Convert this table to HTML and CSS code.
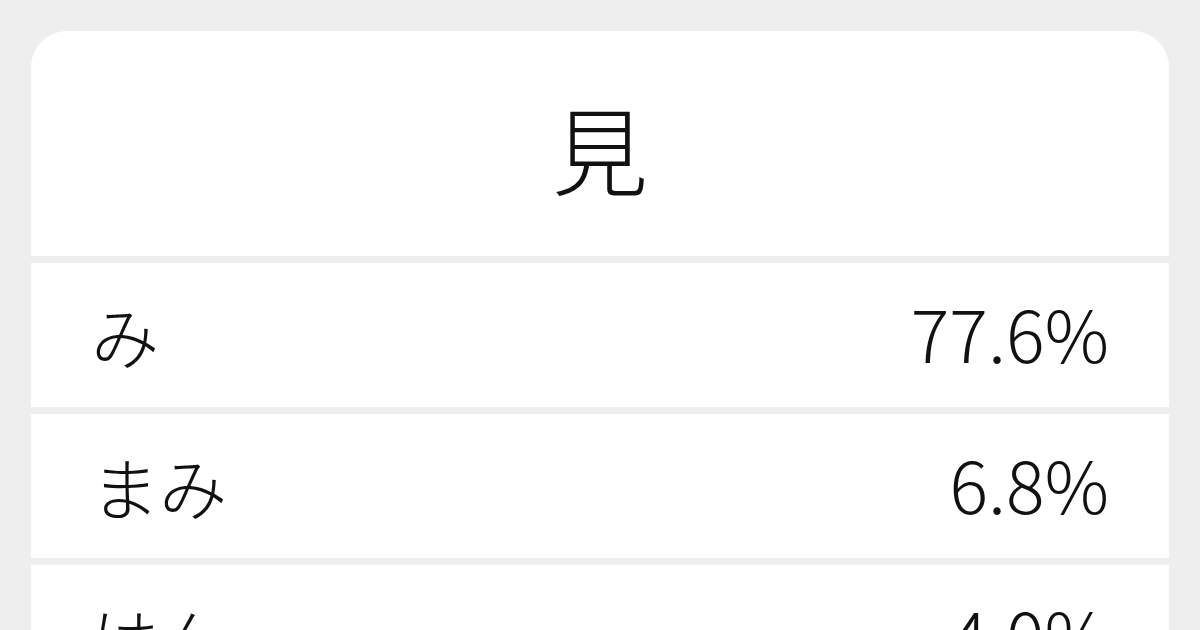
FILE: index.html
```html
<!DOCTYPE html>
<html lang="ja">
<head>
<meta charset="utf-8">
<link rel="stylesheet" href="styles.css">
</head>
<body>
<div class="card">
  <div class="head"><h1 class="kanji">見</h1></div>
  <div class="row"><span class="reading">み</span><span class="pct">77.6%</span></div>
  <div class="row"><span class="reading">まみ</span><span class="pct">6.8%</span></div>
  <div class="row"><span class="reading">はん</span><span class="pct">4.0%</span></div>
</div>
</body>
</html>
```
FILE: styles.css
```css
html, body {
  margin: 0;
  padding: 0;
  background: #eeeeee;
}
body {
  width: 1200px;
  height: 630px;
  overflow: hidden;
  padding: 31px 31px 0;
  box-sizing: border-box;
  font-family: "Noto Sans CJK JP", "Noto Sans", sans-serif;
  font-weight: 300;
  color: #111111;
}
.card {
  display: flex;
  flex-direction: column;
  gap: 7px;
  border-radius: 36px 36px 0 0;
  overflow: hidden;
}
.head {
  height: 225px;
  background: #ffffff;
  display: flex;
  align-items: center;
  justify-content: center;
}
.kanji {
  margin: 0;
  font-size: 96px;
  font-weight: 300;
  line-height: 1;
  padding-top: 6px;
}
.row {
  height: 144px;
  flex: none;
  background: #ffffff;
  display: flex;
  align-items: center;
  justify-content: space-between;
  padding: 0 60px 0 60px;
}
.reading {
  font-size: 68px;
  line-height: 1;
}
.pct {
  font-size: 72px;
  line-height: 1;
  padding-bottom: 6px;
}
```
